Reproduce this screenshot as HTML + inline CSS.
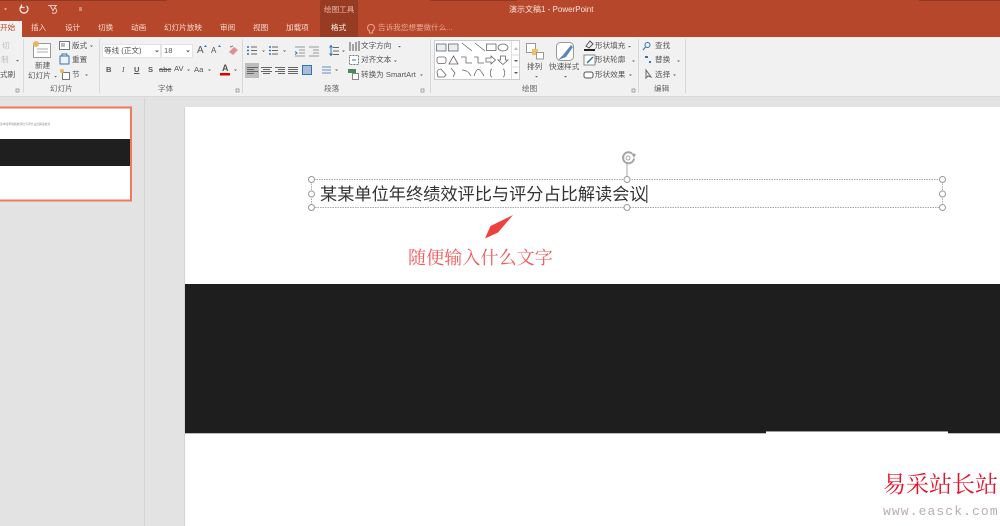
<!DOCTYPE html>
<html><head><meta charset="utf-8"><style>
html,body{margin:0;padding:0;width:1000px;height:526px;overflow:hidden;background:#e3e3e3}
body{position:relative;font-family:"Liberation Sans","Noto Sans CJK SC",sans-serif}
.a{position:absolute}
.t{position:absolute;white-space:nowrap;font-size:7.6px;line-height:12px;color:#555}
.w{color:#f3d9d0}
svg{position:absolute;left:0;top:0}
</style></head><body>
<div class="a" style="left:0;top:0;width:1000px;height:37px;background:#b7472a"></div>
<div class="a" style="left:0;top:0;width:167px;height:1px;background:#8e3a24"></div>
<div class="a" style="left:430px;top:0;width:87px;height:1px;background:#8e3a24"></div>
<div class="a" style="left:919px;top:0;width:81px;height:1px;background:#8e3a24"></div>
<div class="a" style="left:320px;top:0;width:38px;height:37px;background:#983b23"></div>
<div class="a" style="left:0;top:21px;width:22px;height:16px;background:#f1f1f1"></div>
<div class="a" style="left:0;top:37px;width:1000px;height:59px;background:#f1f1f1"></div>
<div class="a" style="left:0;top:96px;width:1000px;height:10px;background:#e3e3e3;border-top:1px solid #d8d8d8"></div>

<div class="t" style="left:0;top:22px;color:#c0492c">开始</div>
<div class="t w" style="left:31px;top:22px">插入</div>
<div class="t w" style="left:65px;top:22px">设计</div>
<div class="t w" style="left:98px;top:22px">切换</div>
<div class="t w" style="left:131px;top:22px">动画</div>
<div class="t w" style="left:164px;top:22px">幻灯片放映</div>
<div class="t w" style="left:220px;top:22px">审阅</div>
<div class="t w" style="left:253px;top:22px">视图</div>
<div class="t w" style="left:286px;top:22px">加载项</div>
<div class="t w" style="left:331px;top:22px;color:#fff">格式</div>
<div class="t w" style="left:324px;top:4px;color:#e8b9aa">绘图工具</div>
<div class="t" style="left:378px;top:22px;color:#e5a794">告诉我您想要做什么...</div>
<div class="t" style="left:509px;top:4px;color:#f5e3dd;font-size:8px">演示文稿1 - PowerPoint</div>

<svg width="1000" height="526" viewBox="0 0 1000 526" fill="none">
<path d="M4 8.500h3l-1.500 1.500z" fill="#eed"/>
<path d="M21.500 6a4 4 0 1 0 5 0M21.500 4.500v3h3" stroke="#f3e3dd" stroke-width="1.300"/>
<path d="M48 5.500h9M50 5.500l3 5 3-5M54 8a2.700 2.700 0 1 1-2 4.500" stroke="#e7c9bf" stroke-width="1"/>
<path d="M79 8h3M79 10h3" stroke="#e7c9bf"/>
<path d="M372.500 31a3.500 3.500 0 1 0-3 0v2h3z" stroke="#e5a794"/>

<g stroke="#d8d8d8"><path d="M23.500 39v54M99.500 39v54M242.500 39v54M430.500 39v54M638.500 39v54M685.500 39v54"/></g>

<rect x="33.500" y="43.500" width="17" height="14" fill="#fff" stroke="#999"/>
<circle cx="36" cy="44" r="3" fill="#e8b95c"/>
<path d="M37 49h11M37 52h11" stroke="#aaa"/>
<rect x="59.500" y="41.500" width="10" height="8" fill="#fff" stroke="#777"/>
<rect x="61" y="43" width="4" height="4" fill="#bbb"/>
<path d="M60 56h9v8h-9zM62 56v-2h5v2" stroke="#2e75b6"/>
<rect x="62.500" y="72.500" width="7" height="7" fill="#fff" stroke="#777"/>
<circle cx="62" cy="71" r="2" fill="#e8b95c"/>

<rect x="102.500" y="44.500" width="58" height="13" fill="#fff" stroke="#e4e4e4"/>
<rect x="161.500" y="44.500" width="31" height="13" fill="#fff" stroke="#e4e4e4"/>
<path d="M155 50.500h4l-2 2zM186 50.500h4l-2 2z" fill="#666"/>
<path d="M204 47l1.500-2 1.500 2zM218 47l1.500-2 1.500 2z" fill="#2e75b6"/>
<path d="M229 52l5-5 4 3-5 5z" fill="#e08f8f"/>
<path d="M230 47l3-1" stroke="#777"/>
<rect x="220" y="73" width="10" height="2.500" fill="#e00000"/>
<rect x="245" y="63" width="14" height="15" fill="#bdbdbd"/>

<g stroke="#666">
<path d="M251 47h6M251 50.500h6M251 54h6M272 47h6M272 50.500h6M272 54h6"/>
<path d="M295 47h10M299 50h6M299 53h6M295 56h10M309 47h10M313 50h6M313 53h6M309 56h10" stroke="#999"/>
<path d="M333 47.500h6M333 51h6M333 54.500h6"/>
<path d="M247 67.500h11M247 69.500h7M247 71.500h11M247 73.500h7"/>
<path d="M261 67.500h11M263 69.500h7M261 71.500h11M263 73.500h7"/>
<path d="M275 67.500h10M278 69.500h7M275 71.500h10M278 73.500h7"/>
<path d="M288 67.500h10M288 69.500h10M288 71.500h10M288 73.500h10"/>
</g>
<path d="M247 47h2M247 50.500h2M247 54h2M269 47h2M269 50.500h2M269 54h2" stroke="#2e75b6" stroke-width="1.500"/>
<path d="M295 51.500l2 1.500-2 1.500" stroke="#2e75b6"/>
<path d="M331 46v9M329.500 47.500l1.500-2 1.500 2M329.500 53.500l1.500 2 1.500-2" stroke="#2e75b6"/>
<rect x="302.500" y="65.500" width="9" height="9" fill="#a8bed8" stroke="#2e75b6"/>
<path d="M322 67h9M322 70h9M322 73h9" stroke="#8fb0d6" stroke-width="1.500"/>
<path d="M350 42v9M353 44v7M356 42v9M359 41v10" stroke="#555"/>
<rect x="349.500" y="55.500" width="9" height="9" fill="#fff" stroke="#777" stroke-dasharray="2 1"/>
<path d="M352 60h4" stroke="#2e75b6"/>
<rect x="348" y="69" width="8" height="4" fill="#4a8a5a"/>
<rect x="352.500" y="73.500" width="6" height="6" fill="#fff" stroke="#888"/>

<path d="M262 50.500h3l-1.500 1.500zM283 50.500h3l-1.500 1.500zM342 50.500h3l-1.500 1.500zM335 69.500h3l-1.500 1.500zM187 69.500h3l-1.500 1.500zM208 69.500h3l-1.500 1.500zM234 69.500h3l-1.500 1.500z" fill="#666"/>

<rect x="434.500" y="40.500" width="85" height="39" fill="#fff" stroke="#ccc"/>
<path d="M511.500 41v38M512 55h7M512 67h7" stroke="#ddd"/>
<g stroke="#666" stroke-width=".8">
<rect x="436.500" y="44" width="9.500" height="7" fill="#e8eef5"/>
<rect x="448.500" y="44" width="9.500" height="7" fill="#e8eef5"/>
<path d="M462 43l10 8M475 43l10 8"/>
<rect x="486.500" y="44" width="9.500" height="6.500"/>
<ellipse cx="503" cy="47.500" rx="5" ry="3.500"/>
<rect x="437" y="57" width="9" height="6.500" rx="2"/>
<path d="M453.500 56l-4.500 8h9zM461 57h5v6h6M474 57h4v6h6"/>
<path d="M486 58h5v-2l4.500 4-4.500 4v-2h-5zM500.500 56h5v4h2.500l-5 4.500-5-4.500h2.500z"/>
<path d="M437 72a4 4 0 0 1 4-3l5 6-2 2h-6zM451 68l4 5-2 4M462 70c4 0 7 2 9 6M474 76c3-9 5-9 10 0M492 69c-2 0-1 4-2 4 1 0 0 4 2 4M503 69c2 0 1 4 2 4-1 0 0 4-2 4"/>
</g>
<path d="M514 50l2-3 2 3z" fill="#bbb"/><path d="M514 60h4l-2 2z" fill="#555"/><path d="M514 72h4l-2 2z" fill="#555"/>

<rect x="526.500" y="43.500" width="9" height="9" fill="#fff" stroke="#999"/>
<rect x="532" y="49" width="6" height="6" fill="#f0c060"/>
<rect x="536.500" y="52.500" width="7" height="6.500" fill="#fff" stroke="#999"/>
<rect x="556.500" y="42.500" width="17" height="18" rx="4" fill="#fff" stroke="#999"/>
<path d="M558 60l5-5 8-10 2 2-7 10z" fill="#5a87b8"/>
<path d="M586 46l4-5 3 3-4 4z" stroke="#555"/><rect x="584" y="49" width="11" height="2" fill="#222"/>
<rect x="584" y="55" width="11" height="10" fill="#fff" stroke="#888"/><path d="M587 63l6-6" stroke="#2e75b6" stroke-width="1.500"/>
<rect x="584" y="72" width="9" height="6" rx="2" fill="#fff" stroke="#555"/>
<circle cx="647.500" cy="45" r="2.500" stroke="#2e75b6"/><path d="M645.500 47l-2.500 3" stroke="#2e75b6"/>
<path d="M645 57h3M649 62h2" stroke="#2e75b6" stroke-width="2"/>
<path d="M646 70v8l2-2 3 1z" stroke="#666"/>
<path d="M16 89h3v3h-3zM236 89h3v3h-3zM421 89h3v3h-3zM632 89h3v3h-3z" stroke="#888" stroke-width=".7"/>
<path d="M398 46h3l-1.500 1.500zM394 60.500h3l-1.500 1.500zM420 74.500h3l-1.500 1.500zM628 46h3l-1.500 1.500zM632 60.500h3l-1.500 1.500zM629 74.500h3l-1.500 1.500zM677 60.500h3l-1.500 1.500zM673 74.500h3l-1.500 1.500zM535 76h3l-1.500 1.500zM564 76h3l-1.500 1.500zM90 45.500h3l-1.500 1.500zM85 74.500h3l-1.500 1.500zM54 76h3l-1.500 1.500zM16 60h3l-1.500 1.500z" fill="#666"/>

<path d="M144.500 98v428" stroke="#d4d4d4"/>
<rect x="-4" y="107.500" width="135" height="93" fill="#fff" stroke="#f0795a" stroke-width="2"/>
<rect x="-2" y="139" width="132" height="27" fill="#1f1f1f"/>
<rect x="185" y="107" width="815" height="419" fill="#fff"/>
<path d="M184.500 107v419" stroke="#d5d5d5"/>
<rect x="185" y="284" width="815" height="149" fill="#1e1e1e"/>
<rect x="766" y="431.500" width="182" height="2" fill="#fff"/>
<path d="M766 431.500h182" stroke="#999"/>
<path d="M185 433.500h581M948 433.500h52" stroke="#bbb"/>

<rect x="311.500" y="179.500" width="631" height="28" stroke="#aaa" stroke-dasharray="1.500 1"/>
<path d="M627 163v16" stroke="#aaa"/>
<path d="M632 153.500a5.500 5.500 0 1 0 2 5" stroke="#a5a5a5" stroke-width="2"/>
<circle cx="628" cy="158" r="2" stroke="#a5a5a5"/>
<path d="M631 153l5 1-2 4z" fill="#a5a5a5"/>
<g fill="#fff" stroke="#999" stroke-width="1"><circle cx="311.500" cy="179.500" r="3"/><circle cx="627" cy="179.500" r="3"/><circle cx="942.500" cy="179.500" r="3"/><circle cx="311.500" cy="194" r="3"/><circle cx="942.500" cy="194" r="3"/><circle cx="311.500" cy="207.500" r="3"/><circle cx="627" cy="207.500" r="3"/><circle cx="942.500" cy="207.500" r="3"/></g>
<path d="M646.800 185v18" stroke="#222"/>
<path d="M513 215L498 232.500L485 238.500L490.500 226Z" fill="#f0403e"/>
</svg>

<div class="t" style="left:2px;top:40px;color:#bbb">切</div>
<div class="t" style="left:1px;top:54px;color:#bbb">制</div>
<div class="t" style="left:0;top:69px">式刷</div>
<div class="t" style="left:35px;top:60px">新建</div>
<div class="t" style="left:28px;top:70px">幻灯片</div>
<div class="t" style="left:72px;top:40px">版式</div>
<div class="t" style="left:72px;top:54px">重置</div>
<div class="t" style="left:72px;top:69px">节</div>
<div class="t" style="left:50px;top:83px;color:#666">幻灯片</div>
<div class="t" style="left:158px;top:83px;color:#666">字体</div>
<div class="t" style="left:324px;top:83px;color:#666">段落</div>
<div class="t" style="left:522px;top:83px;color:#666">绘图</div>
<div class="t" style="left:654px;top:83px;color:#666">编辑</div>
<div class="t" style="left:104px;top:45px">等线 (正文)</div>
<div class="t" style="left:164px;top:45px">18</div>
<div class="t" style="left:197px;top:45px;font-size:10px">A</div>
<div class="t" style="left:211px;top:45px;font-size:8px">A</div>
<div class="t" style="left:106px;top:64px;font-weight:bold">B</div>
<div class="t" style="left:122px;top:64px;font-style:italic;font-family:'Liberation Serif'">I</div>
<div class="t" style="left:134px;top:64px;text-decoration:underline;font-weight:bold">U</div>
<div class="t" style="left:148px;top:64px;font-weight:bold">S</div>
<div class="t" style="left:159px;top:64px;text-decoration:line-through">abc</div>
<div class="t" style="left:174px;top:63px">AV</div>
<div class="t" style="left:194px;top:64px">Aa</div>
<div class="t" style="left:222px;top:62px;font-weight:bold;font-size:9px">A</div>
<div class="t" style="left:361px;top:40px">文字方向</div>
<div class="t" style="left:361px;top:54px">对齐文本</div>
<div class="t" style="left:361px;top:69px">转换为 SmartArt</div>
<div class="t" style="left:527px;top:61px">排列</div>
<div class="t" style="left:549px;top:61px">快速样式</div>
<div class="t" style="left:595px;top:40px">形状填充</div>
<div class="t" style="left:595px;top:54px">形状轮廓</div>
<div class="t" style="left:595px;top:69px">形状效果</div>
<div class="t" style="left:655px;top:40px">查找</div>
<div class="t" style="left:655px;top:54px">替换</div>
<div class="t" style="left:655px;top:69px">选择</div>

<div class="t" style="left:0;top:121.500px;font-size:2.800px;line-height:5px;color:#888">某单位年终绩效评比与评分占比解读会议</div>
<div class="t" style="left:320px;top:183px;font-size:17.200px;line-height:22px;color:#333">某某单位年终绩效评比与评分占比解读会议</div>
<div class="t" style="left:408px;top:246px;font-size:18.100px;line-height:24px;color:#f55a5a;font-family:'Liberation Serif','Noto Serif CJK SC',serif">随便输入什么文字</div>
<div class="t" style="left:883px;top:472px;font-size:23px;line-height:26px;color:#e8102a;font-family:'Liberation Serif','Noto Serif CJK SC',serif">易采站长站</div>
<div class="t" style="left:883px;top:504px;font-size:13px;line-height:16px;letter-spacing:1.100px;color:#b9aeae;font-family:'Liberation Mono',monospace">www.easck.com</div>
</body></html>
